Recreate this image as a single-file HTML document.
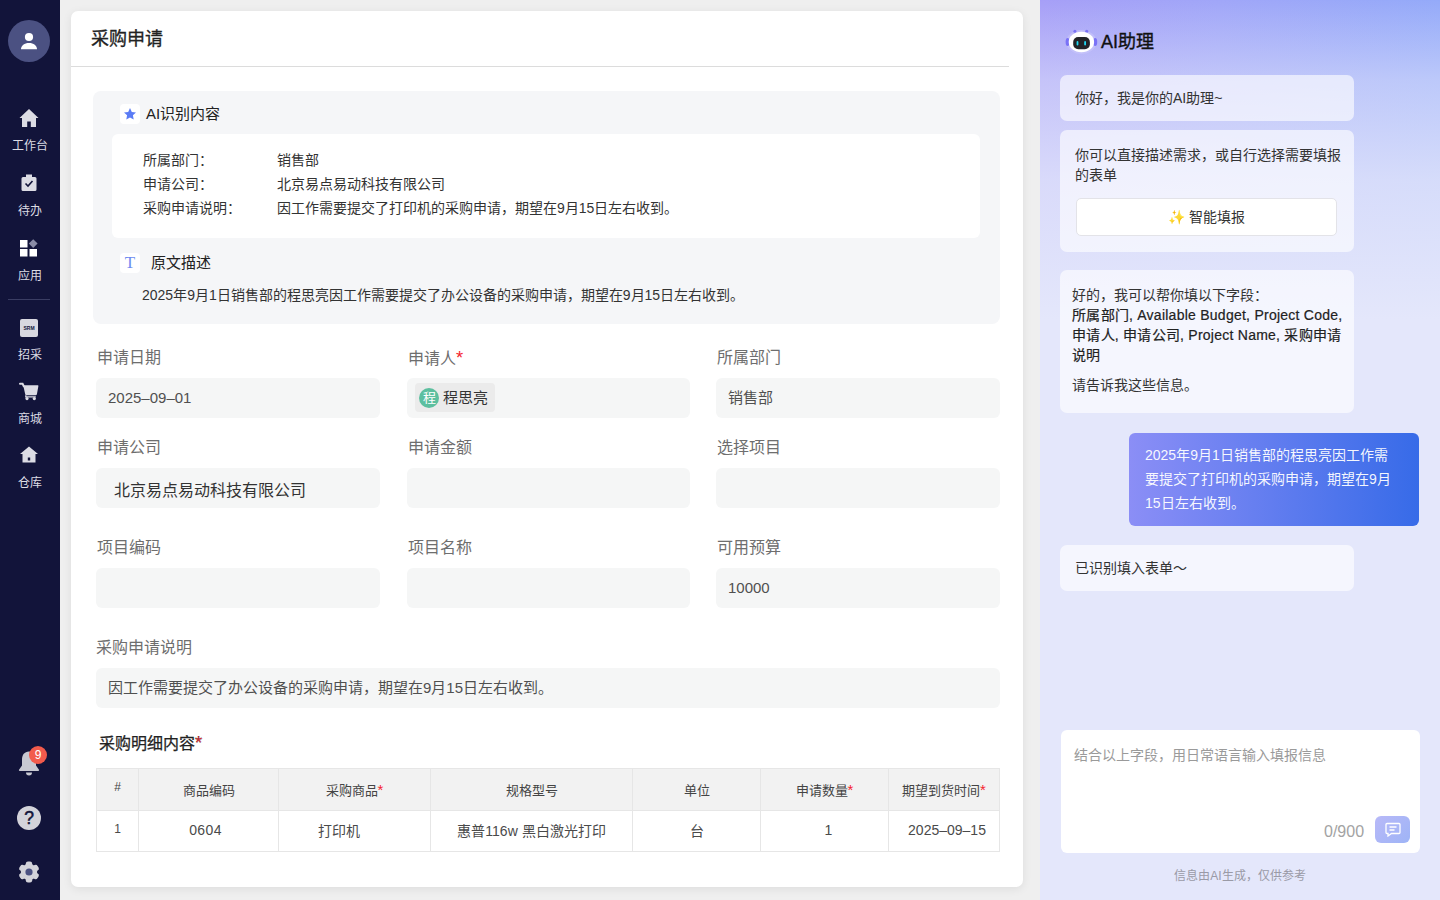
<!DOCTYPE html>
<html lang="zh-CN">
<head>
<meta charset="utf-8">
<style>
*{box-sizing:border-box;margin:0;padding:0}
html,body{width:1440px;height:900px;overflow:hidden}
body{font-family:"Liberation Sans",sans-serif;background:#efefef;position:relative;color:#333}
.a{position:absolute}
svg{position:absolute;display:block}
/* sidebar */
#side{position:absolute;left:0;top:0;width:60px;height:900px;background:#12143a}
.avatar{position:absolute;left:8px;top:20px;width:42px;height:42px;border-radius:50%;background:#4b5182}
.nav{position:absolute;left:0;width:60px;text-align:center;color:#dcdce4;font-size:12px;line-height:16px}
.divider{position:absolute;left:8px;top:299px;width:42px;height:1px;background:#3a3d63}
/* main card */
#card{position:absolute;left:71px;top:11px;width:952px;height:876px;background:#fff;border-radius:7px;box-shadow:0 2px 10px rgba(0,0,0,0.08)}
.title{position:absolute;left:20px;top:16px;font-size:18px;line-height:24px;color:#222;font-weight:500;-webkit-text-stroke:0.3px #222}
.hline{position:absolute;left:0;top:55px;width:938px;height:1px;background:#dcdcdc}
.aibox{position:absolute;left:22px;top:80px;width:907px;height:233px;background:#f5f6f8;border-radius:8px}
.inner{position:absolute;left:19px;top:43px;width:868px;height:104px;background:#fff;border-radius:6px}
.ibox{position:absolute;width:20px;height:20px;background:#fff;border-radius:4px}
.sec{position:absolute;font-size:15px;line-height:20px;color:#222}
.row{position:absolute;font-size:14px;line-height:24px;color:#333;white-space:nowrap}
.lbl{position:absolute;font-size:16px;line-height:22px;color:#6e6e6e;white-space:nowrap}
.inp{position:absolute;height:40px;background:#f5f6f6;border-radius:6px;font-size:15px;color:#505050;line-height:40px;padding-left:12px;white-space:nowrap}
.req{color:#f5222d;font-size:1.15em}
table{position:absolute;border-collapse:collapse;font-size:13px;color:#444}
td,th{border:1px solid #e6e6e6;text-align:center;font-weight:400}
th{background:#f2f2f2;height:42px}
tr+tr td{height:41px}
td{height:42px;font-size:14px;color:#4a4a4a;padding-bottom:3px}
/* panel */
#panel{position:absolute;left:1040px;top:0;width:400px;height:900px;background:linear-gradient(180deg,rgba(228,231,251,0) 0px,rgba(228,231,251,0.5) 80px,rgba(228,231,251,0.82) 180px,#e4e7fb 320px),linear-gradient(90deg,#a69ff7,#a0a6f8 45%,#94aaf9)}
.bub{position:absolute;left:20px;width:294px;background:rgba(255,255,255,0.62);border-radius:7px;font-size:14px;color:#333;line-height:20px;padding-left:15px}
</style>
</head>
<body>
<div id="side">
  <div class="avatar">
    <svg width="42" height="42" viewBox="0 0 42 42"><circle cx="21" cy="17" r="4.1" fill="#fff"/><path d="M13 29.2c0-3.6 3.4-6.2 8-6.2s8 2.6 8 6.2z" fill="#fff"/></svg>
  </div>
  <svg style="left:19px;top:108px" width="20" height="20" viewBox="0 0 20 20"><path d="M10 1L0.5 10h2.5v9h5.2v-5.5h3.6V19h5.2v-9h2.5z" fill="#dcdce4"/></svg>
  <div class="nav" style="top:138px">工作台</div>
  <svg style="left:20px;top:173px" width="18" height="19" viewBox="0 0 18 19"><path d="M6 1.5h6v2.5h3a1.5 1.5 0 0 1 1.5 1.5v11a1.5 1.5 0 0 1-1.5 1.5H3a1.5 1.5 0 0 1-1.5-1.5v-11A1.5 1.5 0 0 1 3 4h3z" fill="#dcdce4"/><path d="M5.5 10.5l2.5 2.5 4.5-5" stroke="#12143a" stroke-width="1.6" fill="none"/></svg>
  <div class="nav" style="top:203px">待办</div>
  <svg style="left:20px;top:239px" width="18" height="18" viewBox="0 0 18 18"><rect x="0" y="1" width="7.5" height="7.5" fill="#fff"/><rect x="0" y="10" width="7.5" height="7.5" fill="#fff"/><rect x="9.5" y="10" width="7.5" height="7.5" fill="#fff"/><path d="M13.2 0.2L17.6 4.6 13.2 9 8.8 4.6z" fill="#8a8ca6"/></svg>
  <div class="nav" style="top:268px">应用</div>
  <div class="divider"></div>
  <div class="a" style="left:20px;top:319px;width:18px;height:18px;background:#d8d8e0;border-radius:2px;font-size:5px;line-height:18px;text-align:center;color:#12143a;font-weight:bold">SRM</div>
  <div class="nav" style="top:347px">招采</div>
  <svg style="left:19px;top:382px" width="20" height="19" viewBox="0 0 20 19"><path d="M1 1.8h2.6l1.2 2.4" stroke="#dcdce4" stroke-width="2" fill="none" stroke-linecap="round"/><path d="M4.2 3.2h14.6a0.6 0.6 0 0 1 0.6 0.7l-1.5 8.3a1.4 1.4 0 0 1-1.4 1.1H7.6a1.4 1.4 0 0 1-1.4-1.1z" fill="#dcdce4"/><path d="M6.8 13.3v1.5h10" stroke="#dcdce4" stroke-width="1.3" fill="none"/><circle cx="8" cy="16.6" r="1.6" fill="#dcdce4"/><circle cx="15.3" cy="16.6" r="1.6" fill="#dcdce4"/></svg>
  <div class="nav" style="top:411px">商城</div>
  <svg style="left:20px;top:446px" width="18" height="17" viewBox="0 0 18 17"><path d="M9 0.5L0 8h2.5v8.5h13V8H18z" fill="#dcdce4"/><rect x="7.8" y="11.5" width="2.4" height="3" fill="#12143a"/></svg>
  <div class="nav" style="top:475px">仓库</div>
  <svg style="left:18px;top:745px" width="30" height="34" viewBox="0 0 30 34"><path d="M11 6.5c-4.6 0-7 3.6-7 8.2v5.8L1.2 24.6a0.8 0.8 0 0 0 0.6 1.4h18.4a0.8 0.8 0 0 0 0.6-1.4L18 20.5v-5.8c0-4.6-2.4-8.2-7-8.2z" fill="#c8c9d2"/><path d="M8 27.6h6a3 3 0 0 1-6 0z" fill="#c8c9d2"/><circle cx="20" cy="10" r="9" fill="#f25b4c"/><text x="20" y="14" font-size="12" fill="#fff" text-anchor="middle" font-family="Liberation Sans">9</text></svg>
  <svg style="left:17px;top:806px" width="24" height="24" viewBox="0 0 24 24"><circle cx="12" cy="12" r="12" fill="#d3d3da"/><text x="12" y="18.3" font-size="17.5" fill="#12143a" text-anchor="middle" font-family="Liberation Sans" stroke="#12143a" stroke-width="0.5">?</text></svg>
  <svg style="left:18px;top:861px" width="22" height="22" viewBox="-11 -11 22 22"><circle r="8.2" fill="#d3d3da"/><rect x="-3.2" y="-10.5" width="6.4" height="21" rx="2.2" fill="#d3d3da"/><rect x="-3.2" y="-10.5" width="6.4" height="21" rx="2.2" fill="#d3d3da" transform="rotate(60)"/><rect x="-3.2" y="-10.5" width="6.4" height="21" rx="2.2" fill="#d3d3da" transform="rotate(120)"/><circle r="3.6" fill="#4b5182"/></svg>
</div>

<div id="card">
  <div class="title">采购申请</div>
  <div class="hline"></div>
  <div class="aibox">
    <div class="ibox" style="left:27px;top:13px"><svg style="left:3px;top:3px" width="14" height="14" viewBox="0 0 14 14"><path d="M7 1l1.8 3.9 4.2 0.5-3.1 2.9 0.8 4.2L7 10.4 3.3 12.5l0.8-4.2L1 5.4l4.2-0.5z" fill="#5b7cf5"/></svg></div>
    <div class="sec" style="left:53px;top:13px">AI识别内容</div>
    <div class="inner">
      <div class="row" style="left:31px;top:14px">所属部门：</div>
      <div class="row" style="left:165px;top:14px">销售部</div>
      <div class="row" style="left:31px;top:38px">申请公司：</div>
      <div class="row" style="left:165px;top:38px">北京易点易动科技有限公司</div>
      <div class="row" style="left:31px;top:62px">采购申请说明：</div>
      <div class="row" style="left:165px;top:62px">因工作需要提交了打印机的采购申请，期望在9月15日左右收到。</div>
    </div>
    <div class="ibox" style="left:27px;top:162px;font-family:'Liberation Serif',serif;color:#6f8cf0;font-size:17px;line-height:20px;text-align:center">T</div>
    <div class="sec" style="left:58px;top:162px">原文描述</div>
    <div class="row" style="left:49px;top:192px">2025年9月1日销售部的程思亮因工作需要提交了办公设备的采购申请，期望在9月15日左右收到。</div>
  </div>

  <div class="lbl" style="left:26px;top:336px">申请日期</div>
  <div class="lbl" style="left:337px;top:336px">申请人<span class="req">*</span></div>
  <div class="lbl" style="left:646px;top:336px">所属部门</div>
  <div class="inp" style="left:25px;top:367px;width:284px">2025–09–01</div>
  <div class="inp" style="left:336px;top:367px;width:283px">
    <div class="a" style="left:8px;top:5px;width:80px;height:29px;background:#ebebeb;border-radius:4px"></div>
    <div class="a" style="left:12px;top:10px;width:20px;height:20px;border-radius:50%;background:#5cbf9f;color:#fff;font-size:13px;line-height:20px;text-align:center">程</div>
    <div class="a" style="left:36px;top:0;font-size:15px;color:#333">程思亮</div>
  </div>
  <div class="inp" style="left:645px;top:367px;width:284px">销售部</div>

  <div class="lbl" style="left:26px;top:426px">申请公司</div>
  <div class="lbl" style="left:337px;top:426px">申请金额</div>
  <div class="lbl" style="left:646px;top:426px">选择项目</div>
  <div class="inp" style="left:25px;top:457px;width:284px;padding-left:18px;font-size:16px;line-height:46px;color:#333">北京易点易动科技有限公司</div>
  <div class="inp" style="left:336px;top:457px;width:283px"></div>
  <div class="inp" style="left:645px;top:457px;width:284px"></div>

  <div class="lbl" style="left:26px;top:526px">项目编码</div>
  <div class="lbl" style="left:337px;top:526px">项目名称</div>
  <div class="lbl" style="left:646px;top:526px">可用预算</div>
  <div class="inp" style="left:25px;top:557px;width:284px"></div>
  <div class="inp" style="left:336px;top:557px;width:283px"></div>
  <div class="inp" style="left:645px;top:557px;width:284px">10000</div>

  <div class="lbl" style="left:25px;top:626px">采购申请说明</div>
  <div class="inp" style="left:25px;top:657px;width:904px">因工作需要提交了办公设备的采购申请，期望在9月15日左右收到。</div>

  <div class="a" style="left:28px;top:721px;font-size:16px;line-height:22px;color:#222;font-weight:500;-webkit-text-stroke:0.25px #222">采购明细内容<span class="req">*</span></div>
  <table style="left:25px;top:757px;width:904px">
    <tr><th style="width:42px;font-size:12px;padding-bottom:6px">#</th><th style="width:140px">商品编码</th><th style="width:152px">采购商品<span class="req">*</span></th><th style="width:202px">规格型号</th><th style="width:128px">单位</th><th style="width:128px">申请数量<span class="req">*</span></th><th>期望到货时间<span class="req">*</span></th></tr>
    <tr><td style="font-size:12px;padding-bottom:4px">1</td><td style="padding-right:6px;letter-spacing:0.4px">0604</td><td style="padding-right:32px">打印机</td><td>惠普116w 黑白激光打印</td><td>台</td><td style="padding-left:8px">1</td><td style="padding-left:6px">2025–09–15</td></tr>
  </table>
</div>

<div id="panel">
  <svg style="left:24px;top:26px" width="34" height="30" viewBox="0 0 34 30"><ellipse cx="17.4" cy="16" rx="15" ry="12" fill="#c9c7fa" opacity="0.6"/><ellipse cx="3.6" cy="16" rx="2" ry="4" fill="#7a72f6"/><ellipse cx="31.2" cy="16" rx="2" ry="4" fill="#7a72f6"/><circle cx="10.9" cy="5.3" r="1.5" fill="#7a72f6"/><circle cx="22.7" cy="5.3" r="1.5" fill="#7a72f6"/><ellipse cx="17.4" cy="16" rx="12.7" ry="10.2" fill="#fff"/><rect x="9.2" y="11" width="16.7" height="12.2" rx="5" fill="#232428"/><rect x="12.6" y="15" width="1.8" height="4.4" rx="0.9" fill="#1fd8f2"/><rect x="20.2" y="15" width="1.8" height="4.4" rx="0.9" fill="#1fd8f2"/></svg>
  <div class="a" style="left:61px;top:30px;font-size:18px;line-height:24px;color:#111;font-weight:500;-webkit-text-stroke:0.35px #111">AI助理</div>

  <div class="bub" style="top:75px;height:46px;line-height:46px">你好，我是你的AI助理~</div>
  <div class="bub" style="top:130px;height:122px;padding-top:15px">你可以直接描述需求，或自行选择需要填报的表单
    <div class="a" style="left:16px;top:68px;width:261px;height:38px;background:#fff;border:1px solid #e3e3e8;border-radius:5px;text-align:center;line-height:36px;font-size:14px;color:#333">✨ 智能填报</div>
  </div>
  <div class="bub" style="top:270px;height:143px;padding-left:12px;padding-top:15px;white-space:nowrap">好的，我可以帮你填以下字段：<br><span style="font-weight:500;color:#222;-webkit-text-stroke:0.2px #222;letter-spacing:0.25px">所属部门, Available Budget, Project Code,<br>申请人, 申请公司, Project Name, 采购申请<br>说明</span><div style="margin-top:10px">请告诉我这些信息。</div></div>
  <div class="a" style="left:89px;top:433px;width:290px;height:93px;border-radius:6px;background:linear-gradient(90deg,#8b8ef6,#376be8);color:rgba(255,255,255,0.95);font-size:14px;line-height:24px;padding:10px 16px">2025年9月1日销售部的程思亮因工作需<br>要提交了打印机的采购申请，期望在9月<br>15日左右收到。</div>
  <div class="bub" style="top:545px;height:46px;line-height:46px">已识别填入表单～</div>

  <div class="a" style="left:21px;top:730px;width:359px;height:123px;background:#fff;border-radius:6px">
    <div class="a" style="left:13px;top:15px;font-size:14px;line-height:20px;color:#9a9a9a">结合以上字段，用日常语言输入填报信息</div>
    <div class="a" style="left:263px;top:91px;font-size:16px;line-height:22px;color:#a3a3a3">0/900</div>
    <div class="a" style="left:314px;top:86px;width:35px;height:27px;border-radius:6px;background:linear-gradient(135deg,#b8b9f8,#9eb4f6)"><svg style="left:10px;top:6px" width="16" height="15" viewBox="0 0 16 15"><path d="M2 1.5h12a1 1 0 0 1 1 1v8a1 1 0 0 1-1 1H6.5L3 14v-2.5H2a1 1 0 0 1-1-1v-8a1 1 0 0 1 1-1z" fill="none" stroke="#fff" stroke-width="1.3"/><path d="M4.5 5h7M4.5 8h5" stroke="#fff" stroke-width="1.3"/></svg></div>
  </div>
  <div class="a" style="left:0;top:868px;width:400px;text-align:center;font-size:12px;line-height:16px;color:#9a9aa6">信息由AI生成，仅供参考</div>
</div>
</body>
</html>
